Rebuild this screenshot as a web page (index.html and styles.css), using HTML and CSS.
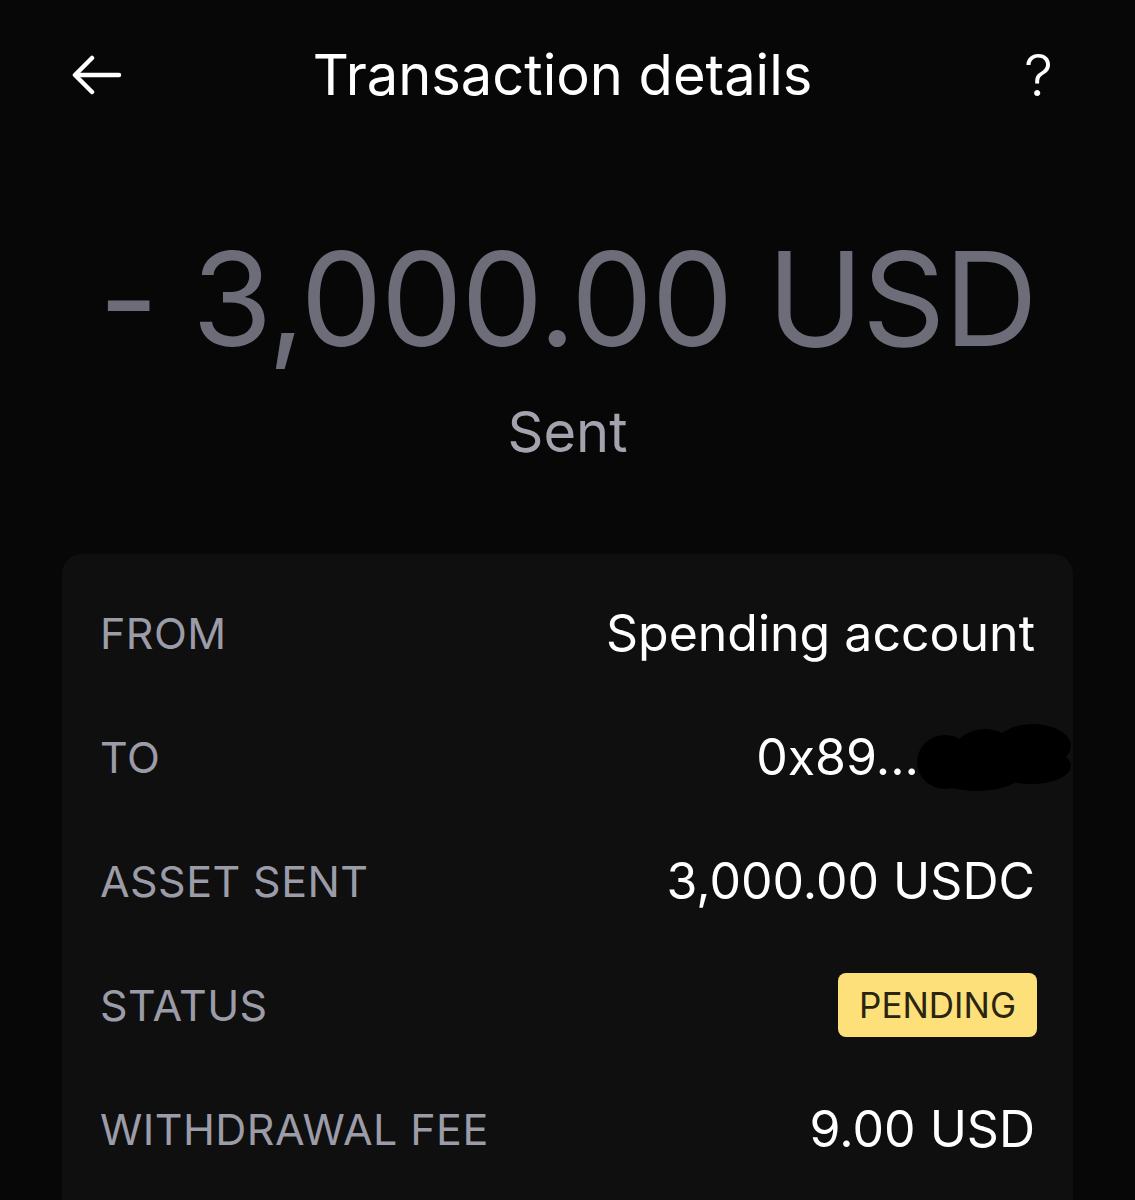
FILE: index.html
```html
<!DOCTYPE html>
<html lang="en">
<head>
    <meta charset="UTF-8">
    <meta name="viewport" content="width=device-width, initial-scale=1.0">
    <title>Transaction details</title>
    <link rel="stylesheet" href="styles.css">
</head>
<body>
    <header class="topbar">
        <button class="icon-btn back" aria-label="Back">
            <svg width="50" height="40" viewBox="0 0 50 40" fill="none" stroke="#fff" stroke-width="4.5" stroke-linecap="round" stroke-linejoin="round">
                <path d="M47 20H4"/>
                <path d="M20 3L3 20l17 17"/>
            </svg>
        </button>
        <h1 class="title">Transaction details</h1>
        <button class="icon-btn help" aria-label="Help">?</button>
    </header>

    <section class="amount">
        <div class="amount-value">- 3,000.00 USD</div>
        <div class="amount-label">Sent</div>
    </section>

    <section class="card">
        <div class="row">
            <span class="label">FROM</span>
            <span class="value">Spending account</span>
        </div>
        <div class="row">
            <span class="label">TO</span>
            <span class="value">0x89...<span class="redact">
                <svg width="158" height="70" viewBox="0 0 158 70">
                    <ellipse cx="30" cy="40" rx="28" ry="27" fill="#000"/>
                    <ellipse cx="70" cy="32" rx="32" ry="25" fill="#000"/>
                    <ellipse cx="118" cy="24" rx="38" ry="22" fill="#000"/>
                    <ellipse cx="62" cy="54" rx="42" ry="15" fill="#000"/>
                    <ellipse cx="116" cy="44" rx="40" ry="18" fill="#000"/>
                </svg>
            </span></span>
        </div>
        <div class="row">
            <span class="label">ASSET SENT</span>
            <span class="value">3,000.00 USDC</span>
        </div>
        <div class="row">
            <span class="label">STATUS</span>
            <span class="badge">PENDING</span>
        </div>
        <div class="row">
            <span class="label">WITHDRAWAL FEE</span>
            <span class="value">9.00 USD</span>
        </div>
    </section>
</body>
</html>
```

FILE: styles.css
```css
body {
    font-family: Inter, "Noto Sans", sans-serif;
    background-color: #070707;
    color: #fff;
    margin: 0;
    padding: 0;
}
.topbar {
    display: flex;
    align-items: center;
    justify-content: space-between;
    height: 150px;
    padding: 0 82px 0 72px;
    box-sizing: border-box;
}
.icon-btn {
    background: none;
    border: none;
    color: #fff;
    padding: 0;
    cursor: pointer;
    width: 56px;
}
.back {
    display: flex;
}
.help {
    font-family: Inter, sans-serif;
    font-size: 58px;
    font-weight: 300;
    text-align: right;
}
.title {
    margin: 0;
    font-size: 56px;
    font-weight: 400;
    letter-spacing: 0;
}
.amount {
    text-align: center;
    padding-top: 84px;
}
.amount-value {
    font-size: 130px;
    font-weight: 400;
    color: #6d6d7a;
    letter-spacing: -0.012em;
    line-height: 1;
}
.amount-label {
    margin-top: 40px;
    font-size: 56px;
    color: #a3a3ae;
    line-height: 1;
}
.card {
    margin: 94px 62px 0;
    background: #0f0f0f;
    border-radius: 20px;
    padding: 17px 38px 40px;
}
.row {
    display: flex;
    justify-content: space-between;
    align-items: center;
    height: 124px;
}
.label {
    font-size: 43px;
    color: #9c9ca8;
    letter-spacing: 0.01em;
}
.value {
    font-size: 50px;
    color: #fff;
    display: flex;
    align-items: center;
}
.redact {
    display: flex;
    margin-right: -38px;
    margin-left: -4px;
}
.badge {
    background: #fde07a;
    color: #2a2410;
    font-size: 35px;
    padding: 11px 21px;
    border-radius: 8px;
    margin-right: -2px;
}
```
